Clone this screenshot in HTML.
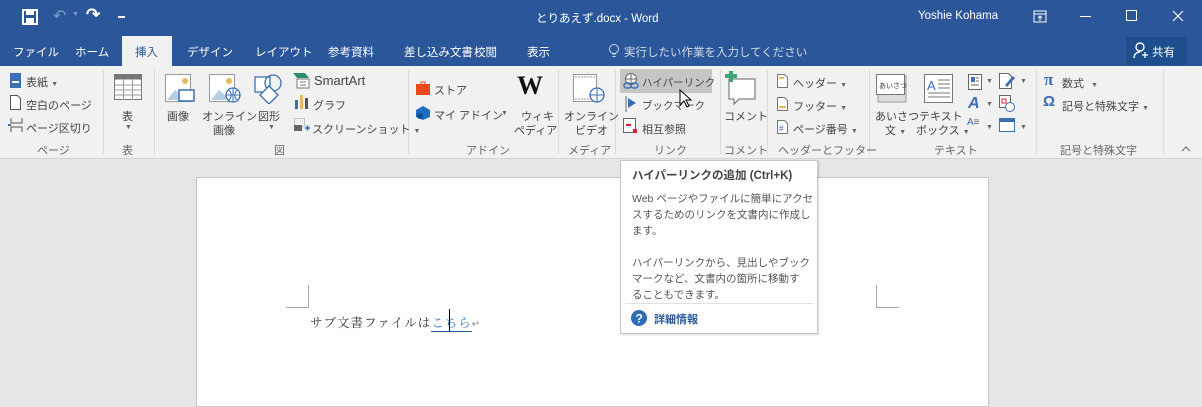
<!DOCTYPE html>
<html><head><meta charset="utf-8"><style>
*{margin:0;padding:0;box-sizing:border-box}
body{width:1202px;height:400px;overflow:hidden;position:relative;background:#e6e6e6;font-family:"Liberation Sans","Noto Sans CJK JP",sans-serif;font-size:11px;color:#444}
.a{position:absolute;white-space:nowrap}
#title{left:0;top:0;width:1202px;height:66px;background:#2b579a;color:#fff}
#rib{left:0;top:66px;width:1202px;height:93px;background:#f1f1f1;border-bottom:1px solid #d4d4d4}
.sep{position:absolute;top:4px;width:1px;height:84px;background:#dadada}
.gl{position:absolute;top:76px;color:#666;font-size:11px}
.t{color:#fff;font-size:11.5px}
.ic{position:absolute}
.arr{font-size:7px;color:#666}
</style></head><body>
<div id="title" class="a">
 <svg class="ic" style="left:22px;top:9px" width="16" height="16"><rect x="1" y="1" width="14" height="14" fill="none" stroke="#fff" stroke-width="2"/><rect x="4" y="2" width="8" height="4" fill="#fff"/><rect x="4" y="9" width="8" height="5" fill="#fff"/></svg>
 <div class="a" style="left:53px;top:6px;color:#7f9cc8;font-size:16px">↶</div><div class="a" style="left:72px;top:11px;color:#7f9cc8;font-size:7px">▼</div>
 <div class="a" style="left:86px;top:5px;color:#fff;font-size:17px;font-weight:bold">↷</div>
 <div class="a" style="left:118px;top:16px;width:7px;height:2px;background:#fff"></div>
 <div class="a t" style="left:536px;top:10px">とりあえず.docx - Word</div>
 <div class="a t" style="left:918px;top:10px">Yoshie Kohama</div>
 <svg class="ic" style="left:1033px;top:10px" width="14" height="13"><rect x="1" y="1" width="12" height="11" fill="none" stroke="#fff"/><line x1="1" y1="4" x2="13" y2="4" stroke="#fff"/><path d="M7 11V6M5 8l2-2 2 2" stroke="#fff" fill="none"/></svg>
 <div class="a" style="left:1080px;top:16px;width:11px;height:1px;background:#fff"></div>
 <div class="a" style="left:1126px;top:10px;width:11px;height:11px;border:1px solid #fff"></div>
 <svg class="ic" style="left:1172px;top:10px" width="12" height="12"><path d="M1 1l10 10M11 1L1 11" stroke="#fff" stroke-width="1.2"/></svg>
 <div class="a" style="left:122px;top:36px;width:50px;height:30px;background:#f1f1f1"></div>
 <div class="a t" style="left:13px;top:44px">ファイル</div>
 <div class="a t" style="left:75px;top:44px">ホーム</div>
 <div class="a" style="left:135px;top:44px;color:#2b579a;font-size:11.5px">挿入</div>
 <div class="a t" style="left:187px;top:44px">デザイン</div>
 <div class="a t" style="left:255px;top:44px">レイアウト</div>
 <div class="a t" style="left:328px;top:44px">参考資料</div>
 <div class="a t" style="left:404px;top:44px">差し込み文書</div>
 <div class="a t" style="left:474px;top:44px">校閲</div>
 <div class="a t" style="left:527px;top:44px">表示</div>
 <svg class="ic" style="left:608px;top:43px" width="12" height="16"><circle cx="6" cy="6" r="4.5" fill="none" stroke="#cfdaea"/><path d="M4 11h4M4.5 13.5h3" stroke="#cfdaea"/></svg>
 <div class="a" style="left:624px;top:44px;color:#cfdaea;font-size:11.5px">実行したい作業を入力してください</div>
 <div class="a" style="left:1126px;top:37px;width:61px;height:28px;background:#1e4e8c"></div>
 <svg class="ic" style="left:1133px;top:42px" width="16" height="18"><circle cx="7" cy="5" r="4" fill="none" stroke="#fff" stroke-width="1.4"/><path d="M1 16c0-4 3-6 6-6" fill="none" stroke="#fff" stroke-width="1.4"/><path d="M9 13h6M12 10v6" stroke="#fff" stroke-width="1.3"/></svg>
 <div class="a t" style="left:1152px;top:44px">共有</div>
</div>

<div id="rib" class="a">
 <div class="sep" style="left:103px"></div><div class="sep" style="left:154px"></div><div class="sep" style="left:408px"></div><div class="sep" style="left:558px"></div><div class="sep" style="left:615px"></div><div class="sep" style="left:720px"></div><div class="sep" style="left:767px"></div><div class="sep" style="left:869px"></div><div class="sep" style="left:1036px"></div><div class="sep" style="left:1163px"></div>
 <svg class="ic" style="left:10px;top:7px" width="12" height="15"><rect width="11" height="15" fill="#3c6eb4"/><rect x="2" y="8" width="7" height="2" fill="#fff"/></svg>
 <div class="a" style="left:26px;top:8px">表紙 <span class="arr">▼</span></div>
 <svg class="ic" style="left:10px;top:29px" width="12" height="15"><path d="M.5.5h7l3 3v11H.5z" fill="#fff" stroke="#555"/></svg>
 <div class="a" style="left:26px;top:31px">空白のページ</div>
 <svg class="ic" style="left:8px;top:51px" width="16" height="16"><path d="M3 1v5h11V1M3 15v-5h11v5" fill="none" stroke="#555"/><path d="M0 8h3" stroke="#3c6eb4" stroke-width="2"/></svg>
 <div class="a" style="left:26px;top:54px">ページ区切り</div>
 <div class="gl" style="left:37px">ページ</div>
 <svg class="ic" style="left:114px;top:8px" width="28" height="26"><rect x=".5" y=".5" width="27" height="25" fill="#fff" stroke="#777"/><rect x=".5" y=".5" width="27" height="5" fill="#777"/><path d="M.5 11h27M.5 16h27M.5 21h27M9.5 5v21M18.5 5v21" stroke="#999"/></svg>
 <div class="a" style="left:122px;top:42px">表</div><div class="a arr" style="left:125px;top:58px">▼</div>
 <div class="gl" style="left:122px">表</div>
 <svg class="ic" style="left:165px;top:8px" width="30" height="30"><rect x=".5" y=".5" width="25" height="27" fill="#fff" stroke="#999"/><path d="M2 26l8-10 7 6 6-4v8z" fill="#b7cde4"/><circle cx="20" cy="7" r="3" fill="#e8b860"/><rect x="14" y="16" width="15" height="11" fill="#fff" stroke="#3c6eb4" stroke-width="1.5"/></svg>
 <div class="a" style="left:167px;top:42px">画像</div>
 <svg class="ic" style="left:209px;top:8px" width="32" height="30"><rect x=".5" y=".5" width="25" height="27" fill="#fff" stroke="#999"/><path d="M2 26l8-10 7 6 6-4v8z" fill="#b7cde4"/><circle cx="20" cy="7" r="3" fill="#e8b860"/><circle cx="24" cy="21" r="7" fill="#fff" stroke="#3c6eb4" stroke-width="1.3"/><path d="M17 21h14M24 14v14M20 16c3 3 3 7 0 10M28 16c-3 3-3 7 0 10" fill="none" stroke="#3c6eb4"/></svg>
 <div class="a" style="left:202px;top:42px">オンライン</div><div class="a" style="left:213px;top:56px">画像</div>
 <svg class="ic" style="left:254px;top:8px" width="30" height="30"><rect x="1" y="3" width="15" height="15" fill="#fff" stroke="#3c6eb4" stroke-width="1.3"/><circle cx="19" cy="9" r="8" fill="none" stroke="#3c6eb4" stroke-width="1.3"/><path d="M15 12l9 9-9 9-9-9z" fill="#fff" stroke="#3c6eb4" stroke-width="1.3"/></svg>
 <div class="a" style="left:258px;top:42px">図形</div><div class="a arr" style="left:268px;top:58px">▼</div>
 <svg class="ic" style="left:293px;top:7px" width="18" height="16"><path d="M0 0h12l4 5H4z" fill="#2e8f6a"/><rect x="4" y="6" width="12" height="9" fill="#fff" stroke="#777"/><path d="M7 9h6M7 12h6" stroke="#777"/></svg>
 <div class="a" style="left:314px;top:7px;font-size:13px">SmartArt</div>
 <svg class="ic" style="left:295px;top:29px" width="14" height="14"><rect x="0" y="5" width="3" height="9" fill="#3c6eb4"/><rect x="5" y="0" width="3" height="14" fill="#e8b860"/><rect x="10" y="3" width="3" height="11" fill="#555"/></svg>
 <div class="a" style="left:313px;top:31px">グラフ</div>
 <svg class="ic" style="left:294px;top:52px" width="16" height="14"><rect x=".5" y=".5" width="10" height="8" fill="none" stroke="#999" stroke-dasharray="1 1"/><rect x="0" y="7" width="8" height="6" fill="#666"/><path d="M11 10h5M13.5 7.5v5" stroke="#3c6eb4" stroke-width="1.6"/></svg>
 <div class="a" style="left:312px;top:55px">スクリーンショット <span class="arr">▼</span></div>
 <div class="gl" style="left:274px">図</div>
 <svg class="ic" style="left:416px;top:15px" width="14" height="14"><path d="M5 3V1h4v2" fill="none" stroke="#e84a19"/><rect x="0" y="3" width="14" height="11" fill="#e84a19"/></svg>
 <div class="a" style="left:434px;top:16px">ストア</div>
 <svg class="ic" style="left:416px;top:40px" width="14" height="14"><path d="M7 0l7 4v7l-7 3-7-3V4z" fill="#1f6fc1"/><circle cx="4" cy="10" r="3" fill="#0d4f99"/></svg>
 <div class="a" style="left:434px;top:41px">マイ アドイン</div><div class="a arr" style="left:501px;top:44px">▼</div>
 <div class="a" style="left:517px;top:5px;font-family:'Liberation Serif',serif;font-size:26px;font-weight:bold;color:#111">W</div>
 <div class="a" style="left:521px;top:42px">ウィキ</div><div class="a" style="left:514px;top:56px">ペディア</div>
 <div class="gl" style="left:466px">アドイン</div>
 <svg class="ic" style="left:573px;top:8px" width="32" height="30"><rect x=".5" y=".5" width="23" height="27" fill="#fff" stroke="#999"/><path d="M2 3h20M2 25h20" stroke="#999" stroke-dasharray="2 1"/><circle cx="24" cy="21" r="7" fill="#fff" stroke="#3c6eb4" stroke-width="1.3"/><path d="M17 21h14M24 14v14" stroke="#3c6eb4"/></svg>
 <div class="a" style="left:564px;top:42px">オンライン</div><div class="a" style="left:575px;top:56px">ビデオ</div>
 <div class="gl" style="left:568px">メディア</div>
 <div class="a" style="left:620px;top:3px;width:92px;height:24px;background:#c5c5c5"></div>
 <svg class="ic" style="left:623px;top:7px" width="16" height="16"><circle cx="8" cy="6" r="5.5" fill="#fff" stroke="#666"/><path d="M2 6h12M8 1v10" stroke="#666"/><rect x="1" y="10" width="7" height="5" rx="2.5" fill="none" stroke="#3c6eb4" stroke-width="1.5"/><rect x="8" y="10" width="7" height="5" rx="2.5" fill="none" stroke="#3c6eb4" stroke-width="1.5"/></svg>
 <div class="a" style="left:642px;top:9px;font-size:10.5px">ハイパーリンク</div>
 <svg class="ic" style="left:625px;top:30px" width="12" height="16"><path d="M1 0v16" stroke="#666"/><path d="M3 2l8 5-8 5z" fill="#3c6eb4"/></svg>
 <div class="a" style="left:642px;top:32px;font-size:10.5px">ブックマーク</div>
 <svg class="ic" style="left:679px;top:23px" width="14" height="20"><path d="M1 1v15l4-4 3 6 2-1-3-6h5z" fill="#fff" stroke="#000"/></svg>
 <svg class="ic" style="left:623px;top:52px" width="16" height="16"><rect x=".5" y=".5" width="12" height="14" fill="#fff" stroke="#666"/><path d="M3 7h5" stroke="#d23" stroke-width="2"/><rect x="10" y="11" width="4" height="4" fill="#d23"/></svg>
 <div class="a" style="left:642px;top:55px">相互参照</div>
 <div class="gl" style="left:654px">リンク</div>
 <svg class="ic" style="left:725px;top:5px" width="32" height="34"><path d="M4 8h26v20H14l-5 5v-5H4z" fill="#fff" stroke="#666"/><path d="M0 5h12M6 0v11" stroke="#3da37a" stroke-width="4"/></svg>
 <div class="a" style="left:724px;top:42px">コメント</div>
 <div class="gl" style="left:724px">コメント</div>
 <svg class="ic" style="left:777px;top:8px" width="11" height="14"><path d="M.5.5h7l3 3v10H.5z" fill="#fff" stroke="#777"/><rect x="2" y="3" width="5" height="2" fill="#e8b860"/></svg>
 <div class="a" style="left:793px;top:9px">ヘッダー <span class="arr">▼</span></div>
 <svg class="ic" style="left:777px;top:31px" width="11" height="14"><path d="M.5.5h7l3 3v10H.5z" fill="#fff" stroke="#777"/><rect x="2" y="9" width="7" height="2" fill="#e8b860"/></svg>
 <div class="a" style="left:793px;top:32px">フッター <span class="arr">▼</span></div>
 <svg class="ic" style="left:777px;top:54px" width="11" height="14"><path d="M.5.5h7l3 3v10H.5z" fill="#fff" stroke="#777"/><text x="2" y="11" font-size="8" fill="#3c6eb4">#</text></svg>
 <div class="a" style="left:793px;top:55px">ページ番号 <span class="arr">▼</span></div>
 <div class="gl" style="left:778px">ヘッダーとフッター</div>
 <svg class="ic" style="left:876px;top:8px" width="32" height="30"><rect x="2" y="2" width="28" height="26" fill="#ddd" stroke="#999"/><rect x=".5" y=".5" width="28" height="20" fill="#fff" stroke="#777"/><text x="3" y="14" font-size="7" fill="#333" font-family="Noto Sans CJK JP">あいさつ</text></svg>
 <div class="a" style="left:875px;top:42px">あいさつ</div><div class="a" style="left:885px;top:56px">文 <span class="arr">▼</span></div>
 <svg class="ic" style="left:924px;top:8px" width="30" height="30"><rect x=".5" y=".5" width="28" height="28" fill="#fff" stroke="#777"/><text x="3" y="16" font-size="13" fill="#3c6eb4">A</text><path d="M14 6h12M14 10h12M14 14h12M4 19h22M4 23h22" stroke="#777"/></svg>
 <div class="a" style="left:919px;top:42px">テキスト</div><div class="a" style="left:916px;top:56px">ボックス <span class="arr">▼</span></div>
 <svg class="ic" style="left:968px;top:8px" width="14" height="16"><rect x=".5" y=".5" width="13" height="15" fill="#fff" stroke="#666"/><rect x="3" y="3" width="4" height="5" fill="#3c6eb4"/><path d="M8 4h3M8 7h3M3 11h8" stroke="#666"/></svg><div class="a arr" style="left:986px;top:12px">▼</div>
 <div class="a" style="left:968px;top:29px;color:#3c6eb4;font-weight:bold;font-style:italic;font-size:16px">A</div><div class="a arr" style="left:986px;top:35px">▼</div>
 <div class="a" style="left:967px;top:51px;color:#3c6eb4;font-size:10px">A<span style="color:#666">≡</span></div><div class="a arr" style="left:986px;top:58px">▼</div>
 <svg class="ic" style="left:999px;top:7px" width="16" height="16"><path d="M.5.5h9l3 3v12H.5z" fill="#fff" stroke="#666"/><path d="M6 12l8-9 2 2-8 9z" fill="#3c6eb4"/></svg><div class="a arr" style="left:1020px;top:12px">▼</div>
 <svg class="ic" style="left:999px;top:29px" width="16" height="18"><rect x=".5" y=".5" width="11" height="12" fill="#fff" stroke="#666"/><rect x="3" y="4" width="4" height="4" fill="none" stroke="#d23"/><circle cx="11" cy="12" r="4.5" fill="#fff" stroke="#3c6eb4"/></svg>
 <svg class="ic" style="left:999px;top:52px" width="16" height="14"><rect x=".5" y=".5" width="15" height="13" fill="#fff" stroke="#3c6eb4"/><rect x="1" y="1" width="14" height="3" fill="#3c6eb4"/></svg><div class="a arr" style="left:1020px;top:58px">▼</div>
 <div class="gl" style="left:934px">テキスト</div>
 <div class="a" style="left:1044px;top:4px;color:#3c6eb4;font-size:17px;font-weight:bold;font-family:'Liberation Serif',serif">π</div>
 <div class="a" style="left:1062px;top:9px">数式 <span class="arr">&nbsp;&nbsp;▼</span></div>
 <div class="a" style="left:1043px;top:27px;color:#3c6eb4;font-size:15px;font-weight:bold">Ω</div>
 <div class="a" style="left:1062px;top:32px">記号と特殊文字 <span class="arr">▼</span></div>
 <div class="gl" style="left:1060px">記号と特殊文字</div>
 <svg class="ic" style="left:1181px;top:80px" width="10" height="6"><path d="M1 5l4-4 4 4" fill="none" stroke="#666"/></svg>
</div>

<div class="a" style="left:196px;top:177px;width:793px;height:230px;background:#fff;border:1px solid #c6c6c6"></div>
<div class="a" style="left:286px;top:285px;width:23px;height:23px;border-right:1px solid #aaa;border-bottom:1px solid #aaa"></div>
<div class="a" style="left:876px;top:285px;width:23px;height:23px;border-left:1px solid #aaa;border-bottom:1px solid #aaa"></div>
<div class="a" style="left:310px;top:313px;font-family:'Noto Serif CJK SC',serif;font-size:12.5px;color:#333;letter-spacing:1px">サブ文書ファイルは<span style="color:#2e75c6;border-bottom:1px solid #1a5aa8">こちら</span><span style="color:#888;font-size:10px">↵</span></div>
<div class="a" style="left:449px;top:309px;width:1px;height:22px;background:#000"></div>

<div class="a" style="left:620px;top:160px;width:198px;height:174px;background:#fff;border:1px solid #c6c6c6;box-shadow:1px 1px 2px rgba(0,0,0,.15)"></div>
<div class="a" style="left:632px;top:167px;font-weight:bold;color:#444;font-size:11.5px">ハイパーリンクの追加 (Ctrl+K)</div>
<div class="a" style="left:632px;top:191px;color:#555;font-size:10.5px;line-height:16px">Web ページやファイルに簡単にアクセ<br>スするためのリンクを文書内に作成し<br>ます。<br><br>ハイパーリンクから、見出しやブック<br>マークなど、文書内の箇所に移動す<br>ることもできます。</div>
<div class="a" style="left:625px;top:303px;width:188px;height:1px;background:#e0e0e0"></div>
<svg class="ic" style="left:631px;top:310px" width="16" height="16"><circle cx="8" cy="8" r="8" fill="#2f6db5"/><text x="4.5" y="12.5" font-size="12" font-weight="bold" fill="#fff" font-family="Liberation Sans">?</text></svg>
<div class="a" style="left:654px;top:311px;color:#2f5a95;font-weight:bold">詳細情報</div>
</body></html>
